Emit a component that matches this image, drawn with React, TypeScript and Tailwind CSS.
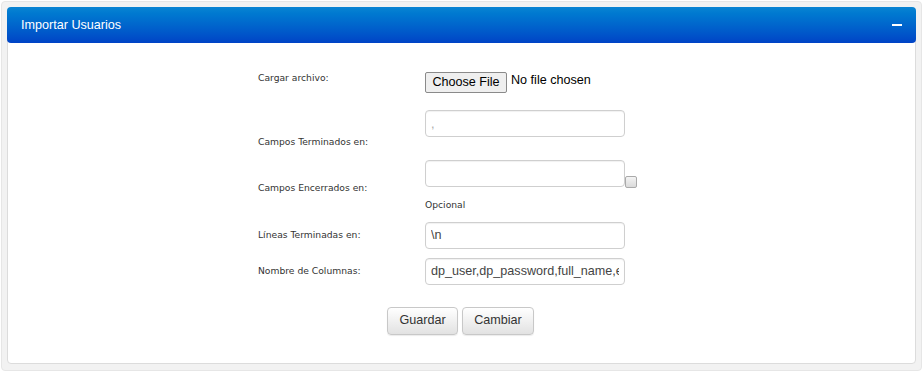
export default function App() {
  const label = "w-[167px] shrink-0 text-[9.2px] text-[#333] font-['DejaVu_Sans',Verdana,sans-serif]"
  const input =
    "h-[27px] w-[200px] rounded-[4px] border border-[#cfcfcf] bg-white px-[5px] text-[12.6px] text-[#444] outline-none shadow-[inset_0_1px_1px_rgba(0,0,0,0.06)] font-['Liberation_Sans',Arial,sans-serif]"
  const btn =
    "h-[28px] rounded-[4px] border border-[#c8c8c8] bg-gradient-to-b from-white to-[#e2e2e2] text-[12.6px] text-[#333] shadow-[0_1px_1px_rgba(0,0,0,0.08)] font-['Liberation_Sans',Arial,sans-serif]"

  return (
    <div className="h-[372px] w-[923px] bg-white p-px">
      <div className="h-[370px] rounded-[4px] border border-[#e6e6e6] bg-[#f2f2f2] p-[5px]">
        <div className="h-[357px] rounded-[4px] border border-[#dcdcdc] bg-white">
          <div className="-mx-px -mt-px flex h-[36px] items-center justify-between rounded-[4px] bg-gradient-to-b from-[#0a84d2] to-[#0043c6] pl-[14px] pr-[14px]">
            <span className="text-[12.6px] text-white font-['Liberation_Sans',Arial,sans-serif]">Importar Usuarios</span>
            <span className="block h-[2px] w-[10px] bg-white" />
          </div>

          <div className="ml-[250px] pt-[29px]">
            <div className="flex items-center">
              <div className={label + " -mt-[10px]"}>Cargar archivo:</div>
              <div className="flex items-start font-['Liberation_Sans',Arial,sans-serif]">
                <button className="h-[21px] w-[82px] rounded-[2px] border border-[#8a8a8a] bg-[#efefef] text-[12.6px] leading-none text-black">
                  Choose File
                </button>
                <span className="ml-[4px] -mt-[1px] text-[12.6px] text-black">No file chosen</span>
              </div>
            </div>

            <div className="mt-[17px] flex">
              <div className={label + " pt-[25px]"}>Campos Terminados en:</div>
              <input className={input + " text-[#aaa]"} readOnly value="," />
            </div>

            <div className="mt-[11px] flex">
              <div className={label + " pt-[21px]"}>Campos Encerrados en:</div>
              <div>
                <div className="flex items-end">
                  <input className={input} readOnly value="" />
                  <span className="mb-[-1px] block h-[12px] w-[12px] rounded-[2px] border border-[#aaa] bg-gradient-to-b from-[#f4f4f4] to-[#dadada]" />
                </div>
                <div className="mt-[11px] text-[9.2px] text-[#333] font-['DejaVu_Sans',Verdana,sans-serif]">Opcional</div>
              </div>
            </div>

            <div className="mt-[10px] flex items-center">
              <div className={label}>Líneas Terminadas en:</div>
              <input className={input} readOnly value="\n" />
            </div>

            <div className="mt-[9px] flex items-center">
              <div className={label}>Nombre de Columnas:</div>
              <input className={input} readOnly value="dp_user,dp_password,full_name,email" />
            </div>
          </div>

          <div className="mt-[22px] flex justify-center gap-[4px] pr-[2px]">
            <button className={btn + " w-[71px]"}>Guardar</button>
            <button className={btn + " w-[72px]"}>Cambiar</button>
          </div>
        </div>
      </div>
    </div>
  )
}
